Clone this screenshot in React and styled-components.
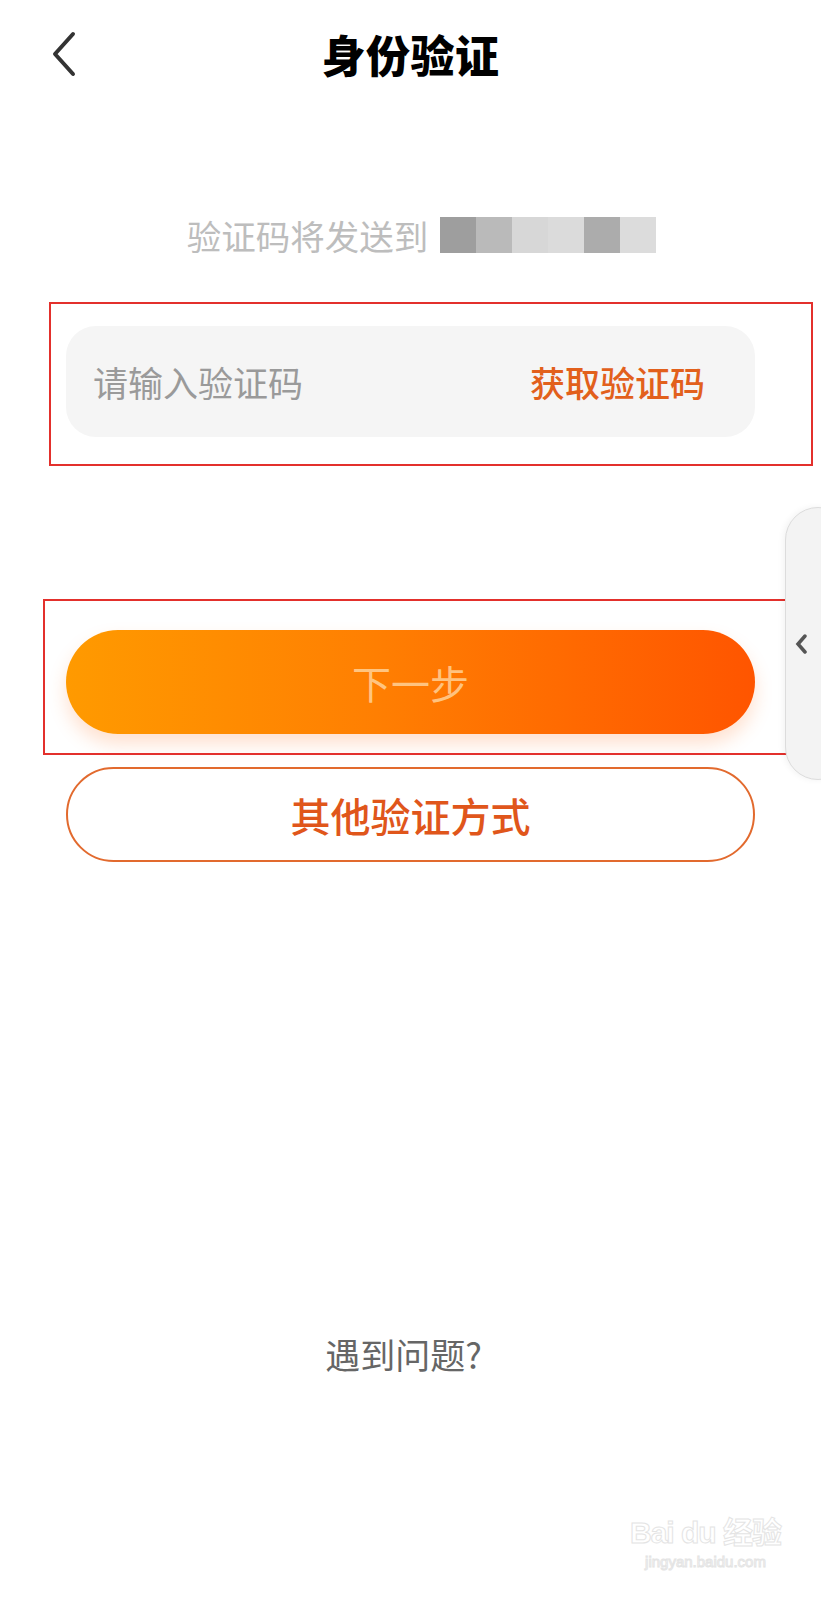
import React from 'react';
import styled, { createGlobalStyle } from 'styled-components';

const GlobalStyle = createGlobalStyle`
    html, body {
        margin: 0;
        padding: 0;
        background: #ffffff;
    }
    body {
        font-family: "Noto Sans CJK SC", "Noto Sans", sans-serif;
        -webkit-font-smoothing: antialiased;
    }
`

const Page = styled.div`
    position: relative;
    width: 821px;
    height: 1600px;
    background: #fff;
    overflow: hidden;
`

const Header = styled.header`
    position: relative;
    display: flex;
    align-items: center;
    justify-content: center;
    height: 108px;
`

const BackButton = styled.button`
    position: absolute;
    left: 44px;
    top: 26px;
    width: 40px;
    height: 56px;
    padding: 0;
    border: 0;
    background: transparent;
    display: flex;
    align-items: center;
    justify-content: center;
`

const Title = styled.h1`
    margin: 0;
    font-size: 44px;
    font-weight: 900;
    color: #000;
    letter-spacing: 0.5px;
`

const Body = styled.main`
    display: flex;
    flex-direction: column;
    padding: 0 66px;
`

const SendTo = styled.div`
    display: flex;
    align-items: center;
    justify-content: center;
    height: 36px;
    margin-top: 109px;
    padding-left: 22px;
    font-size: 34.5px;
    color: #bdbdbd;
`

const Masked = styled.div`
    display: flex;
    height: 36px;
    margin-left: 12px;
    & > span {
        width: 36px;
        height: 100%;
    }
`

const Marked = styled.div`
    position: relative;
    margin-top: ${props => props.$gap}px;
`

const Highlight = styled.div`
    position: absolute;
    top: ${props => props.$t}px;
    left: ${props => props.$l}px;
    right: ${props => props.$r}px;
    bottom: ${props => props.$b}px;
    border: 2px solid #e3302c;
    pointer-events: none;
`

const CodeField = styled.div`
    display: flex;
    align-items: center;
    justify-content: space-between;
    height: 111px;
    padding: 0 50px 0 27px;
    border-radius: 30px;
    background: #f5f5f5;
    font-size: 35px;
`

const Placeholder = styled.span`
    color: #9a9a9a;
`

const GetCode = styled.span`
    color: #e2601c;
    font-weight: 500;
`

const NextButton = styled.button`
    display: flex;
    align-items: center;
    justify-content: center;
    width: 100%;
    height: 104px;
    border: 0;
    border-radius: 52px;
    background: linear-gradient(90deg, #ff9a00 0%, #ff7f02 45%, #ff5500 100%);
    box-shadow: 0 10px 18px rgba(255, 120, 40, 0.22);
    font-family: inherit;
    font-size: 39px;
    color: rgba(255, 220, 170, 0.75);
`

const OutlineButton = styled.button`
    display: flex;
    align-items: center;
    justify-content: center;
    width: 100%;
    height: 95px;
    margin-top: 33px;
    border: 2px solid #e26a2e;
    border-radius: 48px;
    background: #fff;
    font-family: inherit;
    font-size: 40px;
    font-weight: 500;
    color: #e0561b;
`

const Help = styled.div`
    margin-top: 471px;
    padding-right: 14px;
    text-align: center;
    font-size: 35px;
    line-height: 42px;
    color: #666;
`

const SideTab = styled.div`
    position: absolute;
    top: 507px;
    right: -30px;
    width: 66px;
    height: 273px;
    border: 1px solid #dcdcdc;
    border-radius: 34px;
    background: #f3f3f3;
    box-shadow: -2px 0 6px rgba(0, 0, 0, 0.05);
    display: flex;
    align-items: center;
    padding-left: 9px;
    box-sizing: border-box;
`

const Watermark = styled.div`
    position: absolute;
    left: 630px;
    top: 1514px;
    display: flex;
    flex-direction: column;
    align-items: center;
    font-family: "Liberation Sans", "Noto Sans CJK SC", sans-serif;
    color: #fff;
    -webkit-text-stroke: 1px #e4e4e4;
    .brand {
        font-size: 30px;
        font-weight: 700;
        line-height: 38px;
        letter-spacing: -1px;
    }
    .site {
        font-size: 15px;
        line-height: 20px;
    }
`

const maskColors = ['#9e9e9e', '#bababa', '#d7d7d7', '#dbdbdb', '#acacac', '#dcdcdc']

const App = () => (
    <Page>
        <GlobalStyle />
        <Header>
            <BackButton aria-label="返回">
                <svg width="28" height="46" viewBox="0 0 28 46">
                    <path d="M23 3 L5 23 L23 43" fill="none" stroke="#333" strokeWidth="4" strokeLinecap="round" strokeLinejoin="round" />
                </svg>
            </BackButton>
            <Title>身份验证</Title>
        </Header>
        <Body>
            <SendTo>
                验证码将发送到
                <Masked>
                    {maskColors.map((c, i) => <span key={i} style={{ background: c }} />)}
                </Masked>
            </SendTo>
            <Marked $gap={73}>
                <CodeField>
                    <Placeholder>请输入验证码</Placeholder>
                    <GetCode>获取验证码</GetCode>
                </CodeField>
                <Highlight $t={-24} $l={-17} $r={-58} $b={-29} />
            </Marked>
            <Marked $gap={193}>
                <NextButton>下一步</NextButton>
                <Highlight $t={-31} $l={-23} $r={-52} $b={-21} />
            </Marked>
            <OutlineButton>其他验证方式</OutlineButton>
            <Help>遇到问题?</Help>
        </Body>
        <SideTab>
            <svg width="12" height="20" viewBox="0 0 12 20">
                <path d="M10 2 L3 10 L10 18" fill="none" stroke="#555" strokeWidth="3.5" strokeLinecap="round" />
            </svg>
        </SideTab>
        <Watermark>
            <span className="brand">Bai du 经验</span>
            <span className="site">jingyan.baidu.com</span>
        </Watermark>
    </Page>
)

export default App;
